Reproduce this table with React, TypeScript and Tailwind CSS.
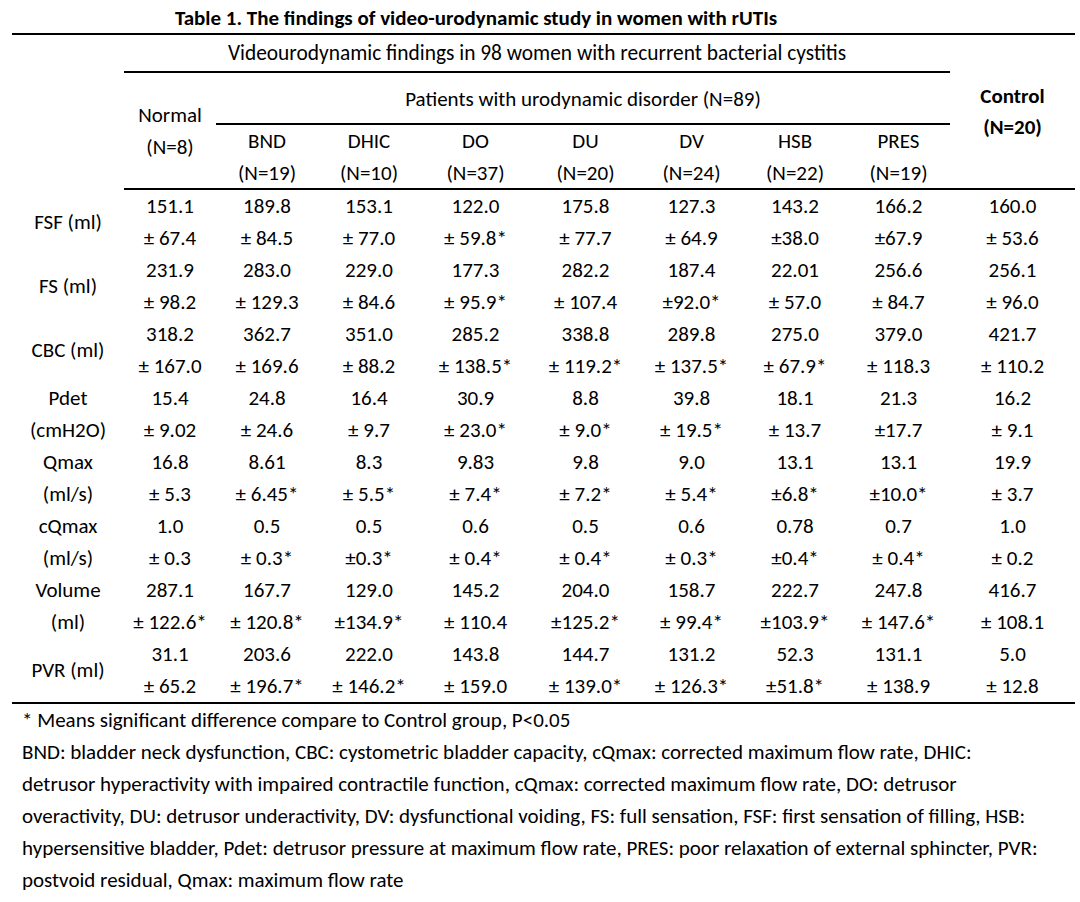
import { Fragment } from "react";

const COLS = "grid-cols-[112px_92px_102px_102px_111px_109px_103px_104px_103px_125px]";

const GROUPS = [
  "BND (N=19)",
  "DHIC (N=10)",
  "DO (N=37)",
  "DU (N=20)",
  "DV (N=24)",
  "HSB (N=22)",
  "PRES (N=19)",
];

// label: one line => centred; two lines => one per value row
const ROWS: { label: string[]; values: [string, string][] }[] = [
  {
    label: ["FSF (ml)"],
    values: [
      ["151.1", "± 67.4"], ["189.8", "± 84.5"], ["153.1", "± 77.0"], ["122.0", "± 59.8*"], ["175.8", "± 77.7"],
      ["127.3", "± 64.9"], ["143.2", "±38.0"], ["166.2", "±67.9"], ["160.0", "± 53.6"],
    ],
  },
  {
    label: ["FS (ml)"],
    values: [
      ["231.9", "± 98.2"], ["283.0", "± 129.3"], ["229.0", "± 84.6"], ["177.3", "± 95.9*"], ["282.2", "± 107.4"],
      ["187.4", "±92.0*"], ["22.01", "± 57.0"], ["256.6", "± 84.7"], ["256.1", "± 96.0"],
    ],
  },
  {
    label: ["CBC (ml)"],
    values: [
      ["318.2", "± 167.0"], ["362.7", "± 169.6"], ["351.0", "± 88.2"], ["285.2", "± 138.5*"], ["338.8", "± 119.2*"],
      ["289.8", "± 137.5*"], ["275.0", "± 67.9*"], ["379.0", "± 118.3"], ["421.7", "± 110.2"],
    ],
  },
  {
    label: ["Pdet", "(cmH2O)"],
    values: [
      ["15.4", "± 9.02"], ["24.8", "± 24.6"], ["16.4", "± 9.7"], ["30.9", "± 23.0*"], ["8.8", "± 9.0*"],
      ["39.8", "± 19.5*"], ["18.1", "± 13.7"], ["21.3", "±17.7"], ["16.2", "± 9.1"],
    ],
  },
  {
    label: ["Qmax", "(ml/s)"],
    values: [
      ["16.8", "± 5.3"], ["8.61", "± 6.45*"], ["8.3", "± 5.5*"], ["9.83", "± 7.4*"], ["9.8", "± 7.2*"],
      ["9.0", "± 5.4*"], ["13.1", "±6.8*"], ["13.1", "±10.0*"], ["19.9", "± 3.7"],
    ],
  },
  {
    label: ["cQmax", "(ml/s)"],
    values: [
      ["1.0", "± 0.3"], ["0.5", "± 0.3*"], ["0.5", "±0.3*"], ["0.6", "± 0.4*"], ["0.5", "± 0.4*"],
      ["0.6", "± 0.3*"], ["0.78", "±0.4*"], ["0.7", "± 0.4*"], ["1.0", "± 0.2"],
    ],
  },
  {
    label: ["Volume", "(ml)"],
    values: [
      ["287.1", "± 122.6*"], ["167.7", "± 120.8*"], ["129.0", "±134.9*"], ["145.2", "± 110.4"], ["204.0", "±125.2*"],
      ["158.7", "± 99.4*"], ["222.7", "±103.9*"], ["247.8", "± 147.6*"], ["416.7", "± 108.1"],
    ],
  },
  {
    label: ["PVR (ml)"],
    values: [
      ["31.1", "± 65.2"], ["203.6", "± 196.7*"], ["222.0", "± 146.2*"], ["143.8", "± 159.0"], ["144.7", "± 139.0*"],
      ["131.2", "± 126.3*"], ["52.3", "±51.8*"], ["131.1", "± 138.9"], ["5.0", "± 12.8"],
    ],
  },
];

function Cell({ lines }: { lines: string[] }) {
  return (
    <div className="flex h-[64px] flex-col items-center justify-center">
      {lines.map((l, i) => (
        <div key={i} className="h-[32px] leading-[32px] whitespace-nowrap">{l}</div>
      ))}
    </div>
  );
}

export default function App() {
  return (
    <div className="min-h-[902px] w-[1080px] bg-white text-black text-[21px] [font-family:Carlito,Calibri,Lato,sans-serif]">
      <div className="w-[952px] h-[33px] pt-[4px] text-center font-bold text-[21px] leading-[28px] whitespace-nowrap">
        Table 1. The findings of video-urodynamic study in women with rUTIs
      </div>

      <div className="ml-[12px] w-[1063px] h-[2px] bg-black" />

      {/* header */}
      <div className={`ml-[12px] grid w-[1063px] ${COLS} grid-rows-[38px_52px_65px]`}>
        <div className="col-start-2 col-end-10 row-start-1 flex items-center justify-center border-b-2 border-black whitespace-nowrap text-[21.4px]">
          Videourodynamic findings in 98 women with recurrent bacterial cystitis
        </div>
        <div className="col-start-10 row-start-1 row-end-4 flex flex-col items-center justify-center border-b-2 border-black font-bold leading-[31px]">
          <div>Control</div>
          <div>(N=20)</div>
        </div>
        <div className="col-start-2 row-start-2 row-end-4 flex flex-col items-center justify-center border-b-2 border-black leading-[32px]">
          <div>Normal</div>
          <div>(N=8)</div>
        </div>
        <div className="col-start-3 col-end-10 row-start-2 flex items-center justify-center border-b-2 border-black pt-[4px] whitespace-nowrap">
          Patients with urodynamic disorder (N=89)
        </div>
        {GROUPS.map((g, i) => {
          const [name, n] = g.split(" ");
          return (
            <div key={g} className="row-start-3 flex flex-col items-center justify-center border-b-2 border-black leading-[32px]" style={{ gridColumnStart: i + 3 }}>
              <div>{name}</div>
              <div>{n}</div>
            </div>
          );
        })}
      </div>

      {/* body */}
      <div className={`ml-[12px] grid w-[1063px] ${COLS} border-b-2 border-black`}>
        {ROWS.map((r) => (
          <Fragment key={r.label[0]}>
            <Cell lines={r.label} />
            {r.values.map((v, i) => (
              <Cell key={i} lines={v} />
            ))}
          </Fragment>
        ))}
      </div>

      <div className="pl-[22px] leading-[32px] text-[21px] whitespace-nowrap">
        <div>* Means significant difference compare to Control group, P&lt;0.05</div>
        <div>BND: bladder neck dysfunction, CBC: cystometric bladder capacity, cQmax: corrected maximum flow rate, DHIC:</div>
        <div>detrusor hyperactivity with impaired contractile function, cQmax: corrected maximum flow rate, DO: detrusor</div>
        <div>overactivity, DU: detrusor underactivity, DV: dysfunctional voiding, FS: full sensation, FSF: first sensation of filling, HSB:</div>
        <div>hypersensitive bladder, Pdet: detrusor pressure at maximum flow rate, PRES: poor relaxation of external sphincter, PVR:</div>
        <div>postvoid residual, Qmax: maximum flow rate</div>
      </div>
    </div>
  );
}
